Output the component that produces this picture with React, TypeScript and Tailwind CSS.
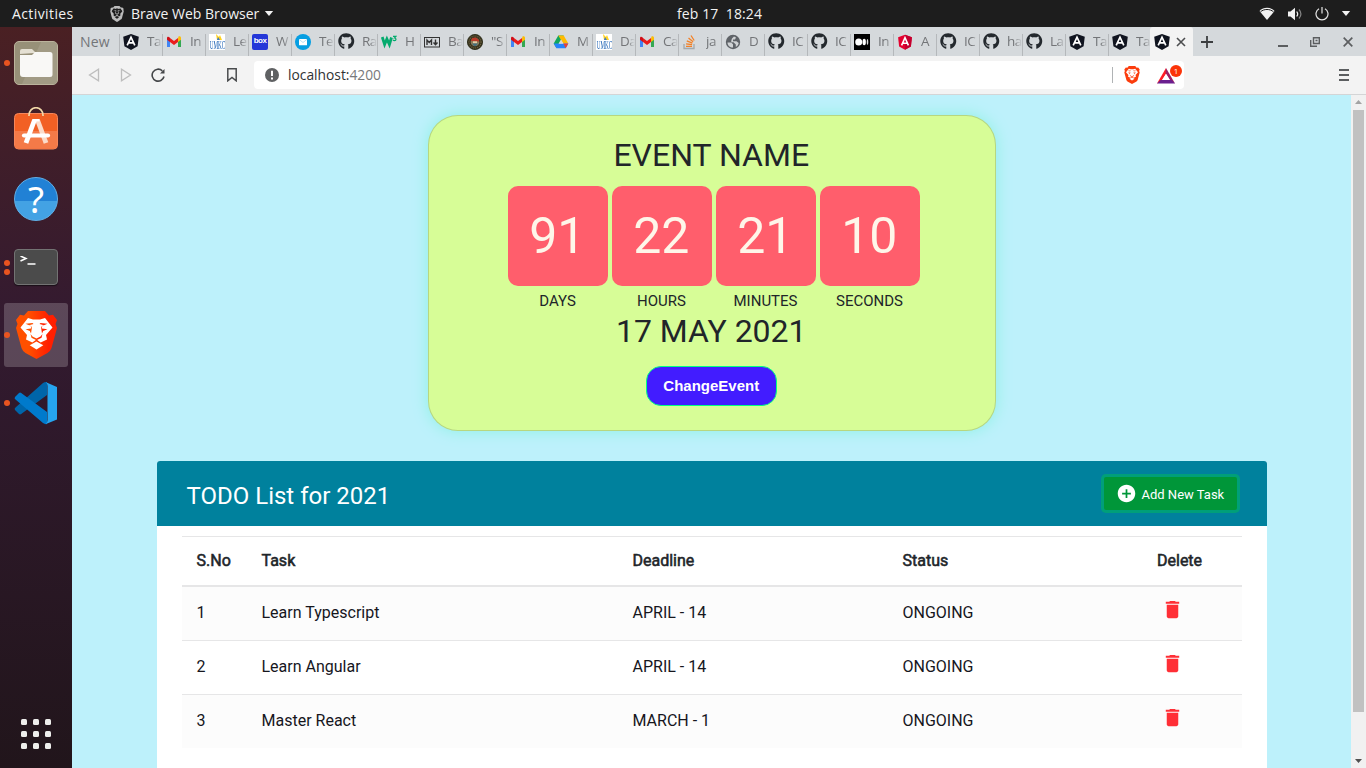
import React from "react";
import { FaGithub } from "react-icons/fa";
import { MdDelete, MdAddCircle } from "react-icons/md";
import { SiBrave } from "react-icons/si";

type IconName =
  | "angular" | "angularRed" | "gmail" | "umkc" | "box" | "mail" | "github"
  | "w3" | "markdown" | "seal" | "drive" | "stack" | "globe" | "medium";

const TABS: { icon: IconName; title: string }[] = [
  { icon: "angular", title: "Ta" },
  { icon: "gmail", title: "In" },
  { icon: "umkc", title: "Le" },
  { icon: "box", title: "W" },
  { icon: "mail", title: "Te" },
  { icon: "github", title: "Ra" },
  { icon: "w3", title: "H" },
  { icon: "markdown", title: "Ba" },
  { icon: "seal", title: '"S' },
  { icon: "gmail", title: "In" },
  { icon: "drive", title: "M" },
  { icon: "umkc", title: "Da" },
  { icon: "gmail", title: "Ca" },
  { icon: "stack", title: "ja" },
  { icon: "globe", title: "D" },
  { icon: "github", title: "IC" },
  { icon: "github", title: "IC" },
  { icon: "medium", title: "In" },
  { icon: "angularRed", title: "A" },
  { icon: "github", title: "IC" },
  { icon: "github", title: "ha" },
  { icon: "github", title: "La" },
  { icon: "angular", title: "Ta" },
  { icon: "angular", title: "Ta" },
];

const TASKS = [
  { id: 1, task: "Learn Typescript", deadline: "APRIL - 14", status: "ONGOING" },
  { id: 2, task: "Learn Angular", deadline: "APRIL - 14", status: "ONGOING" },
  { id: 3, task: "Master React", deadline: "MARCH - 1", status: "ONGOING" },
];

const COUNTDOWN = [
  { value: "91", label: "DAYS" },
  { value: "22", label: "HOURS" },
  { value: "21", label: "MINUTES" },
  { value: "10", label: "SECONDS" },
];

function AngularShield() {
  return (
    <svg viewBox="0 0 16 16" className="size-4">
      <path d="M8 0l7.800 2.700-1.200 9.600L8 16l-6.600-3.700L.2 2.700z" fill="#10141f" />
      <path d="M4.200 11.300L8 3.200l3.800 8.100M5.700 8.900h4.600" fill="none" stroke="#fff" strokeWidth="1.700" />
    </svg>
  );
}

function Favicon({ name }: { name: IconName }) {
  switch (name) {
    case "angular":
      return <AngularShield />;
    case "angularRed":
      return (
        <svg viewBox="0 0 16 16" className="size-4">
          <path d="M8 .8l6.900 2.400-1 9.300L8 15.700l-5.900-3.200-1-9.300z" fill="#e4002f" />
          <path d="M8 .8l6.900 2.400-1 9.300L8 15.700z" fill="#c3002f" />
          <path d="M4.600 11.300L8 3.700l3.400 7.600M6 9.200h4" fill="none" stroke="#fff" strokeWidth="1.600" />
        </svg>
      );
    case "gmail":
      return (
        <svg viewBox="0 0 16 16" className="size-4">
          <path d="M1 5v8h3V7z" fill="#4285f4" />
          <path d="M12 7v6h3V5z" fill="#34a853" />
          <path d="M12 4.500V8l3-2.300V4c0-1.800-1.700-2-2.600-1.300z" fill="#fbbc04" />
          <path d="M4 8V4l4 3 4-3v4l-4 3z" fill="#ea1c1c" />
          <path d="M1 4v1.700L4 8V4l-.6-.8C2.500 2.300 1 2.600 1 4z" fill="#d00f18" />
        </svg>
      );
    case "umkc":
      return (
        <span className="flex size-4 flex-col items-center justify-end overflow-hidden bg-white">
          <svg viewBox="0 0 16 6" className="h-1.5 w-4 shrink-0">
            <path d="M7 0l3 3 1-2 2 5H8z" fill="#ffd21e" />
            <path d="M9 3l2 3H8z" fill="#3f7acb" />
          </svg>
          <span className="scale-x-[.58] scale-y-[1.45] font-['Liberation_Serif',serif] text-[9px] leading-[10px] text-[#1c62b5]">UMKC</span>
        </span>
      );
    case "box":
      return (
        <span className="flex size-4 items-center justify-center rounded-[2px] bg-[#2437d8] pb-px font-['Liberation_Sans',sans-serif] text-[8px] leading-none font-bold tracking-[-0.5px] text-white">
          box
        </span>
      );
    case "mail":
      return (
        <svg viewBox="0 0 16 16" className="size-4">
          <circle cx="8" cy="8" r="8" fill="#069ee2" />
          <rect x="4" y="5" width="8" height="6.300" rx=".6" fill="#fff" />
          <path d="M4.200 5.500L8 8.500l3.800-3" fill="none" stroke="#a5d8f0" strokeWidth=".8" />
        </svg>
      );
    case "github":
      return <FaGithub className="size-[16.5px] text-[#24292e]" />;
    case "w3":
      return (
        <svg viewBox="0 0 16 16" className="size-4">
          <path d="M1.200 3L3.600 10.500l2.300-5.500 2.500 5.500L10.500 3.500" fill="none" stroke="#04aa6d" strokeWidth="2.800" />
          <path d="M12 2.300h3l-1.500 1.700c2 0 2 2.700 0 2.700-.8 0-1.200-.3-1.500-.8" fill="none" stroke="#04aa6d" strokeWidth="1.200" />
        </svg>
      );
    case "markdown":
      return (
        <svg viewBox="0 0 16 16" className="size-4">
          <rect x=".5" y="3.500" width="15" height="9.500" fill="none" stroke="#333" />
          <path d="M3 11V6l2.200 2.500L7.500 6v5M11.500 5.500v5M9.500 8.500l2 2.200 2-2.200" fill="none" stroke="#333" strokeWidth="1.400" />
        </svg>
      );
    case "seal":
      return (
        <svg viewBox="0 0 16 16" className="size-4">
          <circle cx="8" cy="8" r="7.600" fill="#38341f" stroke="#22220f" strokeWidth=".8" />
          <circle cx="8" cy="8" r="6" fill="none" stroke="#6f6440" strokeWidth="1.200" strokeDasharray="1 1" />
          <circle cx="8" cy="8" r="4.300" fill="#8d7d5a" />
          <path d="M4 7l1-3 4-.5L12 6v1.500z" fill="#b83a28" />
          <path d="M6 7.300h4v2H6z" fill="#e3cba4" />
          <path d="M5 9.500h6L9 12H7z" fill="#45707c" />
        </svg>
      );
    case "drive":
      return (
        <svg viewBox="0 0 16 16" className="size-4">
          <path d="M5.300 1.500h5.400L3.500 14.200.7 9.500z" fill="#11a75c" />
          <path d="M5.300 1.500h5.400l4.600 8h-5.200z" fill="#ffba00" />
          <path d="M.7 9.500h14.600l-2.600 4.700H3.500z" fill="#2684fc" />
          <path d="M8 5.500L5.500 9.700h5z" fill="#d5d9dc" />
          <path d="M10.300 9.500h5l-2.600 4.700z" fill="#ea4335" />
        </svg>
      );
    case "stack":
      return (
        <svg viewBox="0 0 16 16" className="size-4" fill="none">
          <path d="M2 10v4.500h10V10" stroke="#a5a9ab" strokeWidth="1.300" />
          <path d="M4 12.300h6M4.100 9.800l6 .9M4.800 6.900l5.600 2.300M6.500 4.100l4.600 3.700M9 1.500l3.200 5" stroke="#f48024" strokeWidth="1.300" />
        </svg>
      );
    case "globe":
      return (
        <svg viewBox="0 0 16 16" className="size-4">
          <circle cx="8" cy="8" r="7.200" fill="#5f6368" />
          <path d="M2.500 8.500h3.700L8 10.300v3.200C5 13.500 2.500 11.500 2.500 8.500zM7 4.500l2-2 2 1-1 2H8v1.800h3.500L13.700 9c-.3 2-1.400 3.300-2.900 4v-2.500L8.500 8.200H6.300V6.500z" fill="#cfd2d4" />
        </svg>
      );
    case "medium":
      return (
        <svg viewBox="0 0 16 16" className="size-4">
          <rect width="16" height="16" fill="#000" />
          <circle cx="4.700" cy="8" r="3.500" fill="#fff" />
          <ellipse cx="10.200" cy="8" rx="1.700" ry="3.200" fill="#fff" />
          <ellipse cx="13.500" cy="8" rx=".8" ry="3" fill="#ddd" />
        </svg>
      );
  }
}

function Lion({ className, id, from, to }: { className: string; id: string; from: string; to: string }) {
  return (
    <svg viewBox="0 0 41 48" className={className}>
      <defs>
        <linearGradient id={id} x1="0" x2="1" y1="0" y2="0">
          <stop offset=".3" stopColor={from} />
          <stop offset=".8" stopColor={to} />
        </linearGradient>
      </defs>
      <path
        d="M12 0h17l4 4.500 4-.8L41 9l-1.500 4L41 17l-5.500 20q-1 3-4 5l-11 6-11-6q-3-2-4-5L0 17l1.500-4L0 9l4-5.300 4 .8z"
        fill={`url(#${id})`}
      />
      <path d="M12 7l5 1.500h7L29 7l7.500 9.500L30 24l1 4.500-6.300 3-4.200-3-4.200 3-6.300-3 1-4.500-6.500-7.500z" fill="#fff" />
      <path d="M20.500 30.500l6.800 3.700-6.800 4.300-6.800-4.300z" fill="#fff" />
      <path
        d="M9.500 12.800l7-.8 1 1-4.500 1.200 3 1.800-1 6.500-1.200-2.500-4.300-1.700 5.500-.8.5-2.200zM31.500 12.800l-7-.8-1 1 4.500 1.200-3 1.800 1 6.500 1.200-2.500 4.300-1.700-5.500-.8-.5-2.200z"
        fill={`url(#${id})`}
      />
      <path d="M14.500 23l2 2.500 4 2 4-2 2-2.500-1 3.700-5 2.600-5-2.600z" fill={`url(#${id})`} />
    </svg>
  );
}

function TopBar() {
  return (
    <header className="grid h-[27px] shrink-0 grid-cols-3 items-center bg-[#1d1d1d] font-['Open_Sans',sans-serif] text-[14px] leading-none text-[#f2f2f2]">
      <div className="flex items-center pl-3">
        <span className="w-[97px] tracking-[0.4px]">Activities</span>
        <SiBrave className="size-4 text-[#bcbcbc]" />
        <span className="ml-1.5 whitespace-nowrap">Brave Web Browser</span>
        <svg viewBox="0 0 10 6" className="ml-[5px] h-[5px] w-2.5"><path d="M0 0h10L5 6z" fill="#f2f2f2" /></svg>
      </div>
      <div className="flex justify-center pl-[73px] tracking-[0.1px] whitespace-pre">feb 17  18:24</div>
      <div className="flex items-center justify-end pr-[15px]">
        <svg viewBox="0 0 16 14" className="h-3.5 w-4">
          <path d="M.5 4C4.500-.3 11.500-.3 15.500 4L8 13z" fill="#f2f2f2" />
          <path d="M1.500 4.800C5 1.700 11 1.700 14.500 4.800" fill="none" stroke="#1d1d1d" strokeWidth="1" />
        </svg>
        <svg viewBox="0 0 16 14" className="ml-3 h-3.5 w-4" fill="none" stroke="#f2f2f2">
          <path d="M1 4.500h2.500L8 .8v12.400L3.500 9.500H1z" fill="#f2f2f2" stroke="none" />
          <path d="M9.700 4.500c1.200 1.500 1.200 3.500 0 5" strokeWidth="1.200" />
          <path d="M12 2.500c2.300 2.700 2.300 6.300 0 9" stroke="#858585" strokeWidth="1.200" />
        </svg>
        <svg viewBox="0 0 14 14" className="ml-3 size-3.5" fill="none" stroke="#e6e6e6" strokeWidth="1.200">
          <path d="M4 1.700a6 6 0 1 0 6 0M7 0v6.500" />
        </svg>
        <svg viewBox="0 0 10 6" className="ml-3 h-[5px] w-2.5"><path d="M0 0h10L5 6z" fill="#f2f2f2" /></svg>
      </div>
    </header>
  );
}

function DockItem({ dots = 0, active = false, children }: { dots?: number; active?: boolean; children: React.ReactNode }) {
  return (
    <div className={"relative flex h-16 w-16 items-center justify-center rounded-[3px] " + (active ? "bg-white/20" : "")}>
      <div className="absolute top-0 left-0 flex h-16 flex-col items-center justify-center gap-[3px]">
        {Array.from({ length: dots }, (_, i) => (
          <span key={i} className="size-1.5 rounded-full bg-[#e95420]" />
        ))}
      </div>
      {children}
    </div>
  );
}

function Dock() {
  return (
    <aside className="flex w-[72px] shrink-0 flex-col items-center justify-between bg-linear-to-b from-[#4a2023] via-[#331a30] via-40% to-[#21151b] pt-1 pb-[19px]">
      <div className="flex flex-col gap-1">
        <DockItem dots={1}>
          <svg viewBox="0 0 44 44" className="size-11">
            <rect x=".5" y=".5" width="43" height="43" rx="4.500" fill="#979078" stroke="#bbb39c" />
            <path d="M27 1h13q3 0 3 3v36q0 3-3 3H8z" fill="#a29b85" />
            <path d="M6 13v-3q0-2 2-2h10l4 4h-2z" fill="#e5e0d3" />
            <path d="M6 14h12l3-3h15q2.500 0 2.500 2.500v20q0 2.500-2.500 2.500H9q-3 0-3-3z" fill="#f9f8f6" />
          </svg>
        </DockItem>
        <DockItem>
          <svg viewBox="0 0 44 44" className="mb-1 size-11">
            <rect x=".5" y="6.500" width="43" height="35.500" rx="4" fill="#f26024" stroke="#f6865a" />
            <path d="M1 24h42v14q0 3.500-3 3.500H4q-3 0-3-3.500z" fill="#f47a48" />
            <path d="M15 9c-.5-11 14.500-11 14 0" fill="none" stroke="#f3d9a8" strokeWidth="1.700" />
            <path d="M23.500 13L32 36" fill="none" stroke="#fbdcca" strokeWidth="4.800" />
            <path d="M20.500 13L12 36" fill="none" stroke="#fff" strokeWidth="4.800" />
            <path d="M18.500 13.200h7" stroke="#fff" strokeWidth="2.400" />
            <path d="M10 28.500h24" stroke="#fff" strokeWidth="4.200" strokeLinecap="round" />
          </svg>
        </DockItem>
        <DockItem>
          <span className="flex size-11 items-center justify-center rounded-full border border-[#60afe7] bg-linear-to-b from-[#2181d5] from-54% to-[#43a2e4] to-54% pt-px font-['Noto_Sans',sans-serif] text-[37px] leading-none text-white">
            <span className="-translate-y-px">?</span>
          </span>
        </DockItem>
        <DockItem dots={2}>
          <span className="h-9 w-11 rounded-[4px] border border-[#737373] bg-[#4b4b4b] pt-1.5 pl-[5px] shadow-[0_1px_1px_#1a0f18]">
            <svg viewBox="0 0 18 12" className="h-3 w-[18px]" fill="none" stroke="#fff" strokeWidth="1.500">
              <path d="M.5 0l5.500 2.500L.5 5M7.500 8h8" />
            </svg>
          </span>
        </DockItem>
        <DockItem dots={1} active>
          <Lion id="dock-lion" className="h-12 w-[41px]" from="#ff5000" to="#ff1f00" />
        </DockItem>
        <DockItem dots={1}>
          <svg viewBox="0 0 44 44" className="size-11">
            <path d="M1 29l4 4q1 .8 2.200 0L33 14V1q-2-.5-4 1L1.500 26.500q-1.500 1-.5 2.500z" fill="#0065a9" />
            <path d="M1 16l4-4q1-.8 2.200 0L33 31v12q-2 .5-4-1L1.500 18.500Q0 17.500 1 16z" fill="#007acc" />
            <path d="M32 1.300L43 6v32.500l-11 4.500q1.500-2 1.500-4V5q0-2-1.500-3.700z" fill="#26a5ef" />
          </svg>
        </DockItem>
      </div>
      <div className="grid grid-cols-3 gap-1.5">
        {Array.from({ length: 9 }, (_, i) => (
          <span key={i} className="size-1.5 rounded-[1.5px] bg-[#eeeeec]" />
        ))}
      </div>
    </aside>
  );
}

function TabStrip() {
  return (
    <div className="flex h-[29px] shrink-0 bg-[#d5d9dc] font-['Open_Sans',sans-serif] text-[14px] text-[#737578]">
      <div className="flex w-[47px] items-center pl-2">
        <span className="tracking-[0.2px]">New</span>
      </div>
      {TABS.map((tab, i) => (
        <div key={i} className="flex w-[43px] shrink-0 items-center">
          <span className="mt-[7px] h-[22px] w-px bg-[#b5b8bb]" />
          <span className="ml-[3px] flex w-[24px] items-center"><Favicon name={tab.icon} /></span>
          <span className="w-[15px] mask-r-from-50% mask-r-to-100% text-[13.5px] tracking-[-0.5px] whitespace-nowrap">{tab.title}</span>
        </div>
      ))}
      <div className="-ml-px flex w-[43px] items-center rounded-t-[3px] bg-[#f3f3f3] pl-1">
        <Favicon name="angular" />
        <svg viewBox="0 0 10 10" className="ml-1.5 size-2.5" stroke="#4c4d4f" strokeWidth="1.600"><path d="M1 1l8 8M9 1L1 9" /></svg>
      </div>
      <div className="flex flex-1 items-center pr-[13px] pl-2">
        <svg viewBox="0 0 12 12" className="size-3" stroke="#3c3e40" strokeWidth="1.800"><path d="M6 0v12M0 6h12" /></svg>
        <span className="flex-1" />
        <span className="mt-2 h-0.5 w-2.5 bg-[#5c5e60]" />
        <svg viewBox="0 0 10 10" className="ml-[22px] size-2.5" fill="none" stroke="#5c5e60" strokeWidth="1.400"><path d="M3.500.7h5.800V6.500H3.500zM.7 3v6.300H7M5.500 3.500h2" /></svg>
        <svg viewBox="0 0 10 10" className="ml-[23px] size-2.5" stroke="#5c5e60" strokeWidth="1.700"><path d="M.7.7l8.600 8.600M9.300.7L.7 9.300" /></svg>
      </div>
    </div>
  );
}

function Toolbar() {
  return (
    <div className="flex h-[39px] shrink-0 items-center border-b border-[#d4d5d6] bg-[#f3f3f3] pl-4">
      <svg viewBox="0 0 12 14" className="h-3.5 w-3" fill="none" stroke="#bdbdbd" strokeWidth="1.300"><path d="M10.500 1.200v11.600L1.500 7z" /></svg>
      <svg viewBox="0 0 12 14" className="ml-5 h-3.5 w-3" fill="none" stroke="#bdbdbd" strokeWidth="1.300"><path d="M1.500 1.200v11.600l9-5.800z" /></svg>
      <svg viewBox="0 0 14 14" className="ml-[19px] size-3.5" fill="none" stroke="#444648" strokeWidth="1.600">
        <path d="M13 8.500A6 6 0 1 1 11.300 2.800" />
        <path d="M9 5.500h4.500V1z" fill="#444648" stroke="none" />
      </svg>
      <svg viewBox="0 0 10 14" className="ml-[62px] h-3.5 w-2.5" fill="none" stroke="#4a4c4e" strokeWidth="1.500"><path d="M.8.8h8.400v12L5 9.500.8 12.800z" /></svg>
      <div className="ml-[17px] flex h-7 w-[930px] items-center rounded bg-white pl-[11px]">
        <svg viewBox="0 0 14 14" className="size-3.5"><circle cx="7" cy="7" r="7" fill="#5f6163" /><path d="M7 2.700v5.300M7 9.500v2" stroke="#fff" strokeWidth="2" /></svg>
        <span className="ml-[9px] flex-1 font-['Open_Sans',sans-serif] text-[13.8px] text-[#303234]">localhost:<span className="text-[#77797b]">4200</span></span>
        <span className="h-4 w-px bg-[#b0b3b5]" />
        <Lion id="shield-lion" className="ml-[11px] h-[18px] w-4" from="#fb3c0c" to="#fb3c0c" />
        <div className="relative ml-[17px] h-[18px] w-[27px]">
          <svg viewBox="0 0 18 16" className="mt-0.5 h-4 w-[18px]">
            <path d="M9 0L0 15.500l4-2L9.500 5z" fill="#ff1d24" />
            <path d="M9 0l9 15.500-4-2L8.500 5z" fill="#9e1f63" />
            <path d="M0 15.500h18l-3.500-3.500h-11z" fill="#6a1f8f" />
            <path d="M9 6l3.700 6H5.300z" fill="#fff" />
          </svg>
          <span className="absolute -top-px right-0.5 flex size-3 items-center justify-center rounded-full bg-[#fb3409] font-['Open_Sans',sans-serif] text-[8px] leading-none text-white">1</span>
        </div>
      </div>
      <div className="ml-[155px] flex flex-col gap-[3px]">
        <span className="h-0.5 w-2.5 bg-[#5c5e60]" />
        <span className="h-0.5 w-2.5 bg-[#5c5e60]" />
        <span className="h-0.5 w-2.5 bg-[#5c5e60]" />
      </div>
    </div>
  );
}

function EventCard() {
  return (
    <section className="mt-5 flex h-[316px] w-[568px] shrink-0 flex-col items-center rounded-[30px] border border-black/15 bg-[#d7fd97] pr-[1.5px] shadow-[0_0_15px_#8ff1e4]">
      <h1 className="mt-5 h-[50px] text-[32px] leading-[38px] font-normal">EVENT NAME</h1>
      <div className="flex gap-1 pl-[5.5px]">
        {COUNTDOWN.map((c) => (
          <div key={c.label} className="flex w-[100px] flex-col items-center">
            <div className="flex h-[100px] w-full items-center justify-center rounded-[10px] bg-[#ff5e6c] pr-[1.5px] text-[50px] leading-none text-[#fef6e9]">{c.value}</div>
            <div className="mt-1 pr-px text-[15px] leading-[22px]">{c.label}</div>
          </div>
        ))}
      </div>
      <h2 className="text-[32px] leading-[38px] font-normal">17 MAY 2021</h2>
      <button className="mt-4 h-10 w-[131px] rounded-[15px] border border-[#00ff84] bg-[#421cff] font-['Liberation_Sans',sans-serif] text-[15px] font-bold text-white">ChangeEvent</button>
    </section>
  );
}

function TodoPanel() {
  return (
    <section className="mt-[30px] flex w-[1110px] flex-1 flex-col rounded-t-[3px] bg-white">
      <div className="flex h-[65px] items-center justify-between rounded-t-[3px] bg-[#00819d] pr-[30px] pl-[29.5px] text-white">
        <h2 className="mt-1 text-2xl font-normal">TODO List for 2021</h2>
        <button className="flex h-[33px] w-[133px] items-center rounded-[2px] bg-[#009639] pl-3 text-[13px] ring-3 ring-[#009f7a]">
          <MdAddCircle className="size-[21px]" />
          <span className="mt-0.5 ml-[4.5px] whitespace-nowrap">Add New Task</span>
        </button>
      </div>
      <div className="mx-[25px] mt-2.5 text-base text-[#212529]">
        <div className="grid h-[51px] grid-cols-[65px_371px_270px_254.5px_1fr] items-center border-t border-b-2 border-[#e6e6e7] pl-[14.5px] [-webkit-text-stroke:0.55px_#212529]">
          <span>S.No</span><span>Task</span><span>Deadline</span><span>Status</span><span>Delete</span>
        </div>
        {TASKS.map((t) => (
          <div key={t.id} className="grid h-[54px] grid-cols-[65px_371px_270px_254.5px_1fr] items-center border-b border-[#e6e6e7] pb-0.5 pl-[14.5px] text-[#16161d] last:h-[53px] last:border-b-0 odd:bg-white even:bg-[#fcfcfc]">
            <span>{t.id}</span>
            <span>{t.task}</span>
            <span>{t.deadline}</span>
            <span>{t.status}</span>
            <MdDelete className="mb-1.5 ml-1 size-[23px] text-[#ff2f36]" />
          </div>
        ))}
      </div>
    </section>
  );
}

export default function App() {
  return (
    <div className="flex h-screen w-screen flex-col overflow-hidden">
      <TopBar />
      <div className="flex min-h-0 flex-1">
        <Dock />
        <div className="flex min-w-0 flex-1 flex-col">
          <TabStrip />
          <Toolbar />
          <div className="flex min-h-0 flex-1">
            <main className="flex flex-1 flex-col items-center overflow-hidden bg-[#bdf1fb] pl-px font-[Roboto,sans-serif] text-[#212529]">
              <EventCard />
              <TodoPanel />
            </main>
            <div className="flex w-[15px] flex-col items-center bg-[#f1f1f1] pt-[5px] pb-[5px]">
              <svg viewBox="0 0 7 4" className="h-1 w-[7px]"><path d="M0 4h7L3.500 0z" fill="#a3a3a3" /></svg>
              <span className="mt-1.5 h-[602px] w-[11px] bg-[#c1c1c1]" />
              <span className="flex-1" />
              <svg viewBox="0 0 7 4" className="h-1 w-[7px]"><path d="M0 0h7L3.500 4z" fill="#505050" /></svg>
            </div>
          </div>
        </div>
      </div>
    </div>
  );
}
